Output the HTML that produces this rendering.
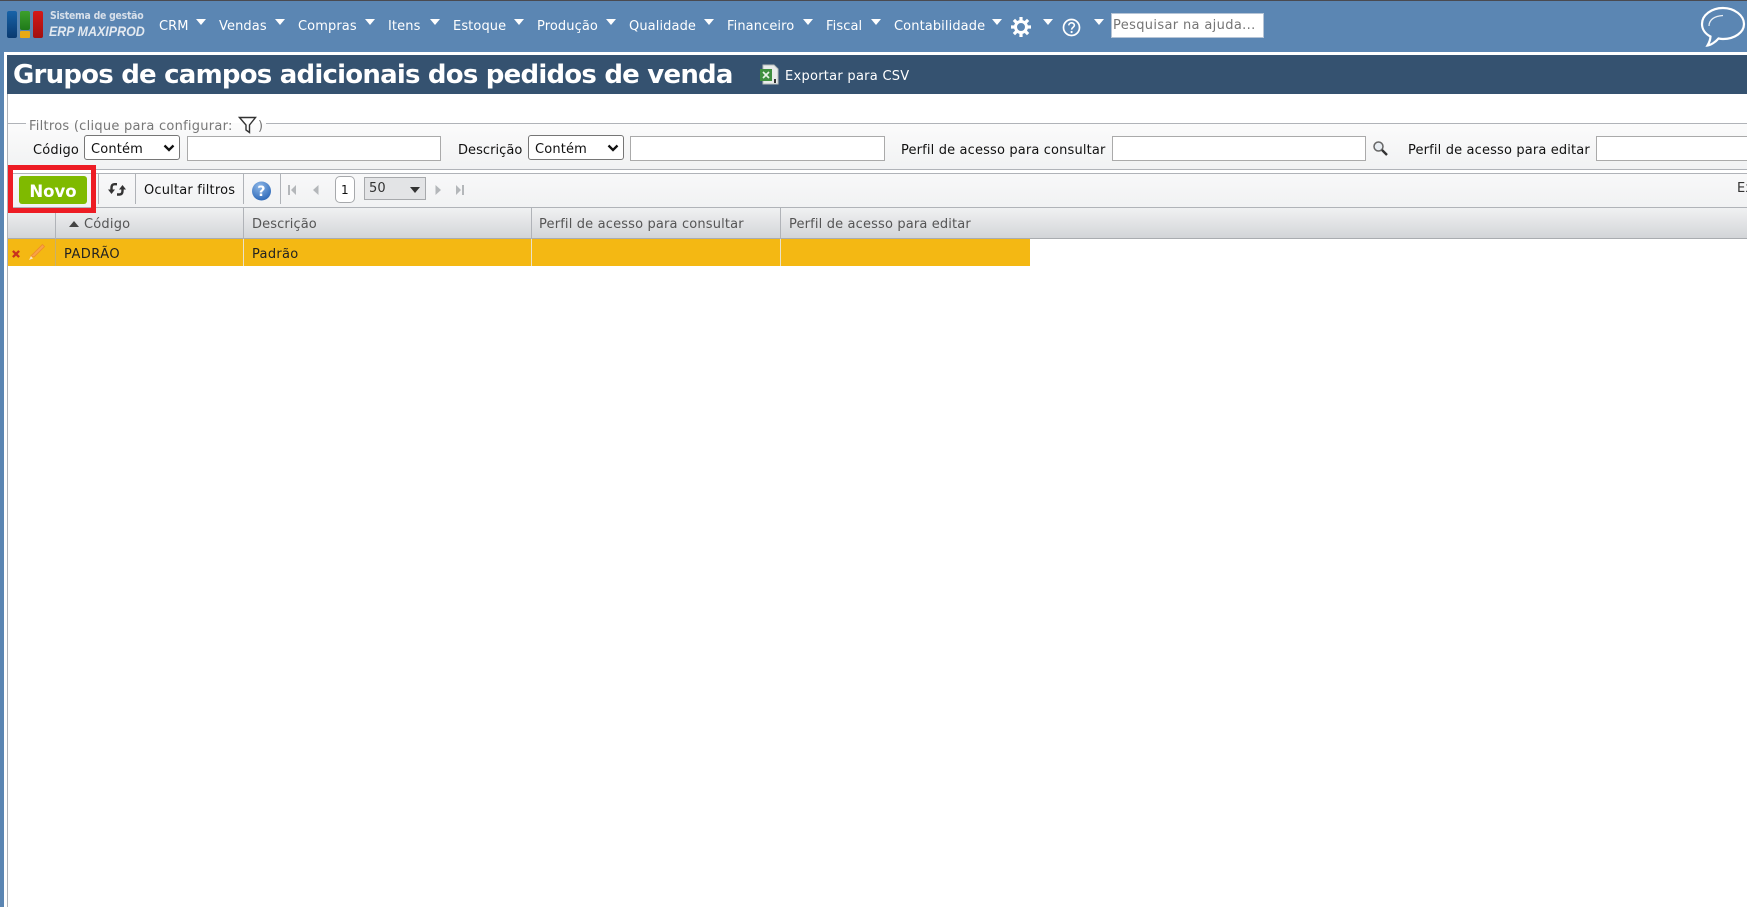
<!DOCTYPE html>
<html lang="pt"><head><meta charset="utf-8"><title>Grupos de campos adicionais</title>
<style>
html,body{margin:0;padding:0;background:#fff}
#p{position:relative;width:1747px;height:907px;overflow:hidden;background:#fff;font:13px "DejaVu Sans","Liberation Sans",sans-serif;color:#111;letter-spacing:.15px}
#p div,#p span.a,#p svg{position:absolute}
.t{position:absolute;white-space:nowrap;line-height:16px}
.n{color:#fff;top:19px;letter-spacing:.1px}
.c{width:0;height:0;border-left:5px solid transparent;border-right:5px solid transparent;border-top:6px solid #fff;top:19px}
.b{background:#fff;border:1px solid #aaa;box-sizing:border-box}
.s{background:#fff;border:1px solid #767676;border-radius:3px;box-sizing:border-box}
.h{color:#555;top:217px}
.v{background:#b0b3b8;width:1px}
.tb{width:1px;background:#b0b3b8;top:174px;height:30px}
</style></head><body><div id="p">
<div style="left:0;top:0;width:1747px;height:52px;background:#5b86b3"></div>
<div style="left:0;top:0;width:1747px;height:1px;background:#4a4a50"></div>
<div style="left:0;top:52px;width:4px;height:855px;background:#5b86b3"></div>
<div style="left:7px;top:94px;width:1px;height:813px;background:#b0b3b8"></div>

<!-- logo -->
<div style="left:7px;top:11px;width:10px;height:27px;background:linear-gradient(#1763a8,#0a3a70);border-radius:2px"></div>
<div style="left:20px;top:11px;width:10px;height:19px;background:linear-gradient(#3da02c,#1f7a1a);border-radius:2px"></div>
<div style="left:20px;top:31px;width:10px;height:7px;background:#e8a915;border-radius:1px"></div>
<div style="left:33px;top:11px;width:10px;height:27px;background:linear-gradient(#d51818,#a01010);border-radius:2px"></div>
<span class="t" style="left:50px;top:8px;color:#d8e0ea;font-size:11px;letter-spacing:-.3px;font-weight:bold;transform-origin:0 50%;transform:scaleX(.85)">Sistema de gestão</span>
<span class="t" style="left:49px;top:23px;color:#e3e9f0;font:italic bold 14px/16px 'Liberation Sans',sans-serif;letter-spacing:0;transform-origin:0 50%;transform:scaleX(.89)">ERP MAXIPROD</span>

<!-- nav -->
<span class="t n" style="left:159px">CRM</span><div class="c" style="left:196px"></div>
<span class="t n" style="left:219px">Vendas</span><div class="c" style="left:275px"></div>
<span class="t n" style="left:298px">Compras</span><div class="c" style="left:365px"></div>
<span class="t n" style="left:388px">Itens</span><div class="c" style="left:430px"></div>
<span class="t n" style="left:453px">Estoque</span><div class="c" style="left:514px"></div>
<span class="t n" style="left:537px">Produção</span><div class="c" style="left:606px"></div>
<span class="t n" style="left:629px">Qualidade</span><div class="c" style="left:704px"></div>
<span class="t n" style="left:727px">Financeiro</span><div class="c" style="left:803px"></div>
<span class="t n" style="left:826px">Fiscal</span><div class="c" style="left:871px"></div>
<span class="t n" style="left:894px">Contabilidade</span><div class="c" style="left:992px"></div>
<svg style="left:1011px;top:17px" width="20" height="20" viewBox="0 0 20 20"><circle cx="10" cy="10" r="5.5" fill="none" stroke="#fff" stroke-width="3"/><g stroke="#fff" stroke-width="3.2"><path d="M10 0v4M10 16v4M0 10h4M16 10h4M2.9 2.9l2.8 2.8M14.3 14.3l2.8 2.8M2.9 17.1l2.8-2.8M14.3 5.7l2.8-2.8"/></g></svg>
<div class="c" style="left:1043px"></div>
<svg style="left:1062px;top:18px" width="19" height="19" viewBox="0 0 19 19"><circle cx="9.5" cy="9.5" r="8" fill="none" stroke="#fff" stroke-width="1.7"/><path d="M6.8 7.4c0-3.4 5.6-3.4 5.6-.1 0 2-2.8 2.2-2.8 4.3" fill="none" stroke="#fff" stroke-width="1.6"/><circle cx="9.6" cy="14" r="1.1" fill="#fff"/></svg>
<div class="c" style="left:1094px"></div>
<div style="left:1111px;top:13px;width:153px;height:25px;background:#fff;border:1px solid #b5c4d6;box-sizing:border-box"></div>
<span class="t" style="left:1113px;top:18px;color:#757575;letter-spacing:.35px">Pesquisar na ajuda...</span>
<svg style="left:1700px;top:6px" width="46" height="42" viewBox="0 0 46 42"><path d="M23 2C11.500 2 2 9 2 18c0 5.500 3.500 10 8.500 12.500-.2 3.500-1.500 6.500-3 9 3.500-.5 8-3.500 11-7 1.500.3 3 .5 4.500.5 11.500 0 21-6.500 21-15S34.500 2 23 2z" fill="none" stroke="#fff" stroke-width="2.200"/><path d="M9 20c0-6 5-10 14-10.500" fill="none" stroke="#e8eef5" stroke-width="1.300"/></svg>

<!-- title -->
<div style="left:7px;top:55px;width:1740px;height:39px;background:#355270"></div>
<span class="t" style="left:13px;top:57px;line-height:36px;color:#fff;font-size:26px;font-weight:bold;letter-spacing:-.78px">Grupos de campos adicionais dos pedidos de venda</span>
<svg style="left:760px;top:64px" width="20" height="21" viewBox="0 0 20 21"><path d="M3 1h11l4 4v15H3z" fill="#e9ecea" stroke="#b9bfbc"/><rect x="0" y="5" width="12" height="12" fill="#3f8f3f"/><path d="M3 8l6 6M9 8l-6 6" stroke="#e8f3e8" stroke-width="1.700"/><rect x="14" y="15" width="2" height="4" fill="#333"/></svg>
<span class="t" style="left:785px;top:69px;color:#fff;letter-spacing:.27px">Exportar para CSV</span>

<!-- filters -->
<div style="left:7px;top:123px;width:1740px;height:47px;background:linear-gradient(#fbfbfb,#f1f2f3);border-top:1px solid #b0b3b8;border-left:1px solid #b0b3b8;border-bottom:1px solid #b0b3b8;box-sizing:border-box"></div>
<div style="left:26px;top:118px;width:240px;height:10px;background:linear-gradient(#fff 50%,#fbfbfb 50%)"></div>
<span class="t" style="left:29px;top:119px;color:#777;letter-spacing:.26px">Filtros (clique para configurar:</span>
<svg style="left:238px;top:116px" width="19" height="18" viewBox="0 0 19 18"><path d="M1.500 1.500h16L11.500 9v7.500L8 14V9z" fill="none" stroke="#333" stroke-width="1.400"/></svg>
<span class="t" style="left:258px;top:119px;color:#777">)</span>

<span class="t" style="left:33px;top:143px">Código</span>
<div class="s" style="left:84px;top:135px;width:96px;height:25px"></div>
<span class="t" style="left:91px;top:142px;letter-spacing:.15px">Contém</span>
<svg style="left:163px;top:144px" width="12" height="8" viewBox="0 0 12 8"><path d="M1.500 1.500L6 6l4.500-4.500" fill="none" stroke="#111" stroke-width="2.300"/></svg>
<div class="b" style="left:187px;top:136px;width:254px;height:25px"></div>

<span class="t" style="left:458px;top:143px;letter-spacing:.05px">Descrição</span>
<div class="s" style="left:528px;top:135px;width:96px;height:25px"></div>
<span class="t" style="left:535px;top:142px;letter-spacing:.15px">Contém</span>
<svg style="left:607px;top:144px" width="12" height="8" viewBox="0 0 12 8"><path d="M1.500 1.500L6 6l4.500-4.500" fill="none" stroke="#111" stroke-width="2.300"/></svg>
<div class="b" style="left:630px;top:136px;width:255px;height:25px"></div>

<span class="t" style="left:901px;top:143px">Perfil de acesso para consultar</span>
<div class="b" style="left:1112px;top:136px;width:254px;height:25px"></div>
<svg style="left:1372px;top:140px" width="17" height="17" viewBox="0 0 17 17"><circle cx="6.500" cy="6.500" r="4.500" fill="#e8edf2" stroke="#666" stroke-width="1.500"/><path d="M10 10l5 5" stroke="#333" stroke-width="2.400"/></svg>
<span class="t" style="left:1408px;top:143px">Perfil de acesso para editar</span>
<div class="b" style="left:1596px;top:136px;width:160px;height:25px"></div>

<!-- toolbar -->
<div style="left:8px;top:173px;width:1739px;height:35px;background:linear-gradient(#f8f8f9,#f1f2f3);border-top:1px solid #b0b3b8;border-bottom:1px solid #b0b3b8;box-sizing:border-box"></div>
<div class="tb" style="left:98px"></div>
<div class="tb" style="left:135px"></div>
<div class="tb" style="left:243px"></div>
<div class="tb" style="left:280px"></div>
<svg style="left:108px;top:182px" width="19" height="15" viewBox="0 0 19 15"><path d="M9 2.200H6.500C4.500 2.200 3.500 3.500 3.500 6v3" fill="none" stroke="#333" stroke-width="2.400"/><path d="M0 7.500h7L3.500 12z" fill="#333"/><path d="M9 12.500h2.500c2 0 3-1.200 3-3.700V6" fill="none" stroke="#333" stroke-width="2.400"/><path d="M11 7.500h7L14.500 3z" fill="#333"/></svg>
<span class="t" style="left:144px;top:183px;letter-spacing:.18px">Ocultar filtros</span>
<svg style="left:251px;top:181px" width="21" height="20" viewBox="0 0 21 20"><defs><radialGradient id="g" cx=".4" cy=".25" r=".9"><stop offset="0" stop-color="#8db7e8"/><stop offset="1" stop-color="#1e5cb0"/></radialGradient></defs><circle cx="10.500" cy="10" r="9.500" fill="url(#g)"/><text x="10.500" y="15" text-anchor="middle" fill="#fff" font-family="DejaVu Sans" font-weight="bold" font-size="14">?</text></svg>
<svg style="left:287px;top:184px" width="10" height="12" viewBox="0 0 10 12"><path d="M1 1h2v10H1zM9 1v10L4 6z" fill="#b4b7ba"/></svg>
<svg style="left:312px;top:184px" width="7" height="12" viewBox="0 0 7 12"><path d="M6.500 1v10L1 6z" fill="#b4b7ba"/></svg>
<div style="left:335px;top:176px;width:20px;height:27px;background:#fff;border:1px solid #a7a9ac;border-radius:5px;box-sizing:border-box"></div>
<span class="t" style="left:341px;top:182px;font-size:12px">1</span>
<div style="left:364px;top:177px;width:62px;height:23px;background:#e3e4e6;border:1px solid #a7a9ac;box-sizing:border-box"></div>
<span class="t" style="left:369px;top:181px;color:#333">50</span>
<div style="left:410px;top:187px;width:0;height:0;border-left:5px solid transparent;border-right:5px solid transparent;border-top:6px solid #333"></div>
<svg style="left:435px;top:184px" width="7" height="12" viewBox="0 0 7 12"><path d="M.5 1v10L6 6z" fill="#b4b7ba"/></svg>
<svg style="left:455px;top:184px" width="10" height="12" viewBox="0 0 10 12"><path d="M1 1v10l5-5zM7 1h2v10H7z" fill="#b4b7ba"/></svg>
<span class="t" style="left:1737px;top:181px;color:#333">Exibindo</span>

<!-- header -->
<div style="left:8px;top:208px;width:1739px;height:31px;background:linear-gradient(#f0f1f2,#d3d5d8);border-bottom:1px solid #a9acb0;box-sizing:border-box"></div>
<div class="v" style="left:55px;top:208px;height:58px"></div>
<div class="v" style="left:243px;top:208px;height:58px"></div>
<div class="v" style="left:531px;top:208px;height:58px"></div>
<div class="v" style="left:780px;top:208px;height:58px"></div>
<div style="left:69px;top:221px;width:0;height:0;border-left:5px solid transparent;border-right:5px solid transparent;border-bottom:6px solid #444"></div>
<span class="t h" style="left:84px;letter-spacing:.2px">Código</span>
<span class="t h" style="left:252px;letter-spacing:.1px">Descrição</span>
<span class="t h" style="left:539px;letter-spacing:.16px">Perfil de acesso para consultar</span>
<span class="t h" style="left:789px;letter-spacing:.15px">Perfil de acesso para editar</span>

<!-- row -->
<div style="left:8px;top:239px;width:1022px;height:27px;background:#f4b813"></div>
<div style="left:55px;top:239px;width:1px;height:27px;background:#c9b06a"></div>
<div style="left:243px;top:239px;width:1px;height:27px;background:#e9e2c9"></div>
<div style="left:531px;top:239px;width:1px;height:27px;background:#e9e2c9"></div>
<div style="left:780px;top:239px;width:1px;height:27px;background:#e9e2c9"></div>
<svg style="left:12px;top:250px" width="8" height="8" viewBox="0 0 9 9"><path d="M1 1l7 7M8 1L1 8" stroke="#c8321e" stroke-width="2.600"/></svg>
<svg style="left:28px;top:243px" width="18" height="18" viewBox="0 0 18 18"><path d="M14.500 1.500l2 2L6 14l-3-1z" fill="#f8a448" stroke="#ee8a2c" stroke-width=".8"/><path d="M3 13l-2 4 4-1.500z" fill="#fbe3c2"/></svg>
<span class="t" style="left:64px;top:247px;color:#222;letter-spacing:.45px">PADRÃO</span>
<span class="t" style="left:252px;top:247px;color:#222;letter-spacing:.3px">Padrão</span>

<!-- novo -->
<div style="left:8px;top:165px;width:88px;height:48px;border:5px solid #ed1c24;box-sizing:border-box"></div>
<div style="left:19px;top:176px;width:68px;height:28px;background:#7fba00;border-radius:3px"></div>
<span class="t" style="left:19px;top:177px;width:68px;line-height:29px;text-align:center;color:#fff;font-weight:bold;font-size:16.5px;letter-spacing:0">Novo</span>
</div></body></html>
